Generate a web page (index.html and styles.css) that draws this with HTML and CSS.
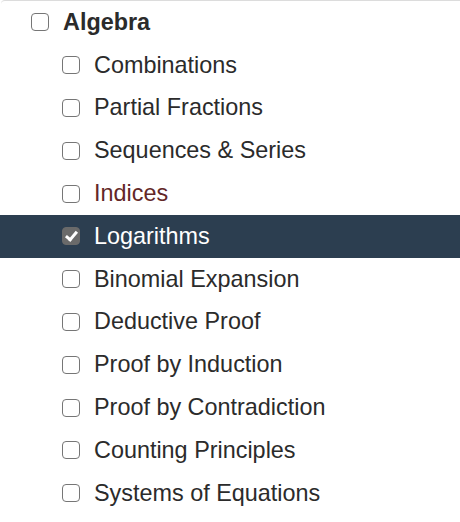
FILE: index.html
```html
<!DOCTYPE html>
<html lang="en">
<head>
    <meta charset="UTF-8">
    <meta name="viewport" content="width=device-width, initial-scale=1.0">
    <title>Topics</title>
    <link rel="stylesheet" href="styles.css">
</head>
<body>
    <div class="topic-tree">
        <ul class="topics">
            <li class="topic">
                <label class="row parent">
                    <input type="checkbox" class="box">
                    <span>Algebra</span>
                </label>
                <ul class="subtopics">
                    <li><label class="row"><input type="checkbox" class="box"><span>Combinations</span></label></li>
                    <li><label class="row"><input type="checkbox" class="box"><span>Partial Fractions</span></label></li>
                    <li><label class="row"><input type="checkbox" class="box"><span>Sequences &amp; Series</span></label></li>
                    <li><label class="row visited"><input type="checkbox" class="box"><span>Indices</span></label></li>
                    <li><label class="row selected"><input type="checkbox" class="box" checked><span>Logarithms</span></label></li>
                    <li><label class="row"><input type="checkbox" class="box"><span>Binomial Expansion</span></label></li>
                    <li><label class="row"><input type="checkbox" class="box"><span>Deductive Proof</span></label></li>
                    <li><label class="row"><input type="checkbox" class="box"><span>Proof by Induction</span></label></li>
                    <li><label class="row"><input type="checkbox" class="box"><span>Proof by Contradiction</span></label></li>
                    <li><label class="row"><input type="checkbox" class="box"><span>Counting Principles</span></label></li>
                    <li><label class="row"><input type="checkbox" class="box"><span>Systems of Equations</span></label></li>
                </ul>
            </li>
        </ul>
    </div>
</body>
</html>
```

FILE: styles.css
```css
body {
    font-family: "Liberation Sans", Arial, sans-serif;
    margin: 0;
    padding: 0;
    background: white;
    color: #2b2b2b;
}
.topic-tree {
    border-top: 1px solid #dcdcdc;
    border-top-left-radius: 4px;
    margin-left: 1px;
}
.topics,
.subtopics {
    list-style: none;
    margin: 0;
    padding: 0;
}
.row {
    display: flex;
    align-items: center;
    gap: 14px;
    height: 42.8px;
    padding-left: 30px;
    font-size: 23.4px;
    cursor: pointer;
}
.parent {
    font-weight: bold;
}
.subtopics .row {
    padding-left: 61px;
}
.visited {
    color: #632727;
}
.selected {
    background: #2c3e50;
    color: white;
    margin-left: -1px;
    padding-left: 62px !important;
}
.box {
    appearance: none;
    -webkit-appearance: none;
    margin: 0;
    width: 18px;
    height: 18px;
    border: 1.5px solid #767676;
    border-radius: 4px;
    background: white;
    position: relative;
    flex-shrink: 0;
}
.box:checked {
    background: #6a6a6a;
    border-color: #6a6a6a;
}
.box:checked::after {
    content: "";
    position: absolute;
    left: 4.5px;
    top: 0.5px;
    width: 4px;
    height: 9px;
    border: solid white;
    border-width: 0 3px 3px 0;
    transform: rotate(40deg);
}
```
